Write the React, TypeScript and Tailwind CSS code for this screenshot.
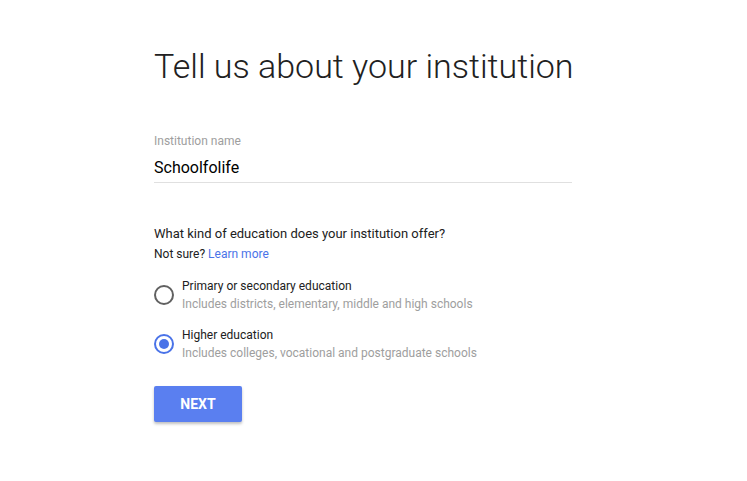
export default function App() {
  return (
    <div className="min-h-screen bg-white font-['Roboto',sans-serif]">
      <div className="ml-[154px] w-[418px] pt-[44px]">
        <h1 className="whitespace-nowrap text-[34px] leading-[44px] font-light text-[#212121]">
          Tell us about your institution
        </h1>

        <div className="mt-[45px]">
          <label className="block text-[12px] leading-[16px] text-[#9e9e9e]">
            Institution name
          </label>
          <div className="mt-[9px] border-b border-[#e0e0e0] pb-[4px] text-[16px] leading-[20px] text-black">
            Schoolfolife
          </div>
        </div>

        <div className="mt-[41px] text-[#212121]">
          <p className="text-[13px] leading-[20px]">What kind of education does your institution offer?</p>
          <p className="text-[12px] leading-[20px]">
            Not sure? <a className="text-[#4a73e8]">Learn more</a>
          </p>
        </div>

        <div className="mt-[13px] flex flex-col gap-[13px]">
          <div className="flex items-start">
            <div className="mt-[8px] h-[20px] w-[20px] shrink-0 rounded-full border-2 border-[#616161]" />
            <div className="ml-[8px] text-[12px] leading-[18px]">
              <div className="text-[#212121]">Primary or secondary education</div>
              <div className="text-[#9e9e9e]">Includes districts, elementary, middle and high schools</div>
            </div>
          </div>
          <div className="flex items-start">
            <div className="mt-[8px] flex h-[20px] w-[20px] shrink-0 items-center justify-center rounded-full border-2 border-[#4a73e8]">
              <div className="h-[10px] w-[10px] rounded-full bg-[#4a73e8]" />
            </div>
            <div className="ml-[8px] text-[12px] leading-[18px]">
              <div className="text-[#212121]">Higher education</div>
              <div className="text-[#9e9e9e]">Includes colleges, vocational and postgraduate schools</div>
            </div>
          </div>
        </div>

        <button className="mt-[24px] h-[36px] w-[88px] rounded-[2px] bg-[#5a7ff0] text-[14px] font-bold text-white shadow-[0_2px_3px_rgba(0,0,0,0.25)]">
          NEXT
        </button>
      </div>
    </div>
  );
}
